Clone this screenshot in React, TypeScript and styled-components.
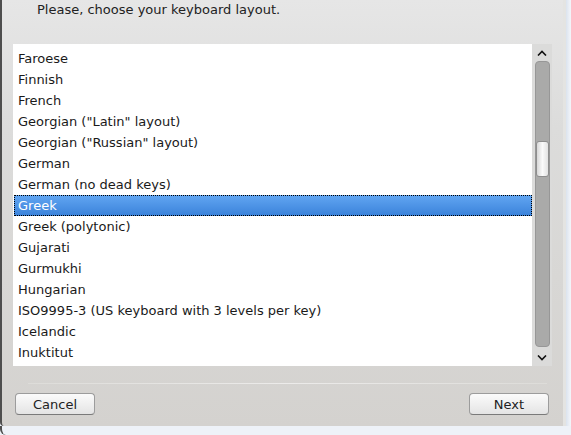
import styled, { createGlobalStyle } from "styled-components";

const layouts = [
  "Faroese",
  "Finnish",
  "French",
  'Georgian ("Latin" layout)',
  'Georgian ("Russian" layout)',
  "German",
  "German (no dead keys)",
  "Greek",
  "Greek (polytonic)",
  "Gujarati",
  "Gurmukhi",
  "Hungarian",
  "ISO9995-3 (US keyboard with 3 levels per key)",
  "Icelandic",
  "Inuktitut",
];

const selected = "Greek";

const GlobalStyle = createGlobalStyle`
  body {
    margin: 0;
    font-family: "DejaVu Sans", "Liberation Sans", sans-serif;
    background: #eef2f8;
  }
`;

const App = () => {
  return (
    <>
      <GlobalStyle />
      <Window>
        <Body>
          <Panel>
            <Header>Please, choose your keyboard layout.</Header>
            <ListWrap>
              <List>
                {layouts.map((name) => (
                  <Row key={name} active={name === selected}>
                    {name}
                  </Row>
                ))}
              </List>
              <Scrollbar>
                <Arrow>
                  <svg width="10" height="6" viewBox="0 0 10 6">
                    <path d="M1 5.5 L5 1.5 L9 5.5" fill="none" stroke="#111" strokeWidth="1.6" />
                  </svg>
                </Arrow>
                <Track>
                  <Thumb />
                </Track>
                <Arrow>
                  <svg width="10" height="6" viewBox="0 0 10 6">
                    <path d="M1 0.5 L5 4.5 L9 0.5" fill="none" stroke="#111" strokeWidth="1.6" />
                  </svg>
                </Arrow>
              </Scrollbar>
            </ListWrap>
            <Separator />
            <Buttons>
              <Button>Cancel</Button>
              <Button>Next</Button>
            </Buttons>
          </Panel>
          <RightFrame />
        </Body>
        <BottomFrame />
      </Window>
    </>
  );
};

export default App;

const Window = styled.div`
  width: 571px;
  height: 435px;
  display: flex;
  flex-direction: column;
  background: #eef2f8;
  overflow: hidden;
`;

const Body = styled.div`
  display: flex;
  height: 426px;
`;

const Panel = styled.div`
  width: 561px;
  border-left: 2px solid #4e4e4e;
  border-bottom-left-radius: 4px;
  background: linear-gradient(#e6e6e6, #dcdcdb 30%, #d4d2cf);
  display: flex;
  flex-direction: column;
`;

const RightFrame = styled.div`
  flex: 1;
  border-left: 3px solid #e4e4e2;
  background: linear-gradient(90deg, #dbe3ee, #f4f6fa);
`;

const BottomFrame = styled.div`
  flex: 1;
  border-left: 2px solid #4e4e4e;
  border-bottom-left-radius: 6px;
  background: #eef2f8;
`;

const Header = styled.div`
  height: 20px;
  line-height: 20px;
  padding-left: 35px;
  font-size: 13px;
  color: #222;
  margin-bottom: 24px;
`;

const ListWrap = styled.div`
  display: flex;
  margin-left: 11px;
  width: 539px;
  height: 322px;
`;

const List = styled.div`
  flex: 1;
  background: #fff;
  padding-top: 4px;
  overflow: hidden;
`;

const Row = styled.div<{ active?: boolean }>`
  height: 21px;
  line-height: 21px;
  font-size: 13px;
  color: ${({ active }) => (active ? "#fff" : "#1a1a1a")};
  background: ${({ active }) =>
    active ? "linear-gradient(#62a6f2, #3a82da)" : "transparent"};
  outline: ${({ active }) => (active ? "1px dotted #000" : "none")};
  outline-offset: -1px;
  margin-left: ${({ active }) => (active ? "1px" : "0")};
  padding-left: ${({ active }) => (active ? "4px" : "5px")};
`;

const Scrollbar = styled.div`
  width: 20px;
  background: #dbdbda;
  display: flex;
  flex-direction: column;
  align-items: center;
`;

const Arrow = styled.div`
  height: 17px;
  width: 20px;
  display: flex;
  align-items: center;
  justify-content: center;
`;

const Track = styled.div`
  flex: 1;
  width: 13px;
  margin-left: 1px;
  border: 1px solid #979797;
  border-radius: 4px;
  background: #aaaaa9;
  position: relative;
  margin-bottom: 2px;
`;

const Thumb = styled.div`
  position: absolute;
  left: 0;
  top: 79px;
  width: 11px;
  height: 34px;
  border: 1px solid #8e8e8e;
  border-radius: 3px;
  background: linear-gradient(90deg, #d8d8d8, #fafafa 50%, #e2e2e2);
`;

const Separator = styled.div`
  margin: 17px 16px 0 26px;
  height: 1px;
  background: linear-gradient(90deg, #dddcd9, #ecebea 50%, #dddcd9);
`;

const Buttons = styled.div`
  display: flex;
  justify-content: space-between;
  padding: 9px 14px 0 13px;
`;

const Button = styled.button`
  width: 80px;
  height: 22px;
  border: 1px solid #9c9c9c;
  border-bottom-color: #7a7a7a;
  border-radius: 4px;
  background: linear-gradient(#fbfbfb, #e4e4e4);
  font-family: "DejaVu Sans", "Liberation Sans", sans-serif;
  font-size: 13px;
  color: #222;
  padding: 0;
`;
